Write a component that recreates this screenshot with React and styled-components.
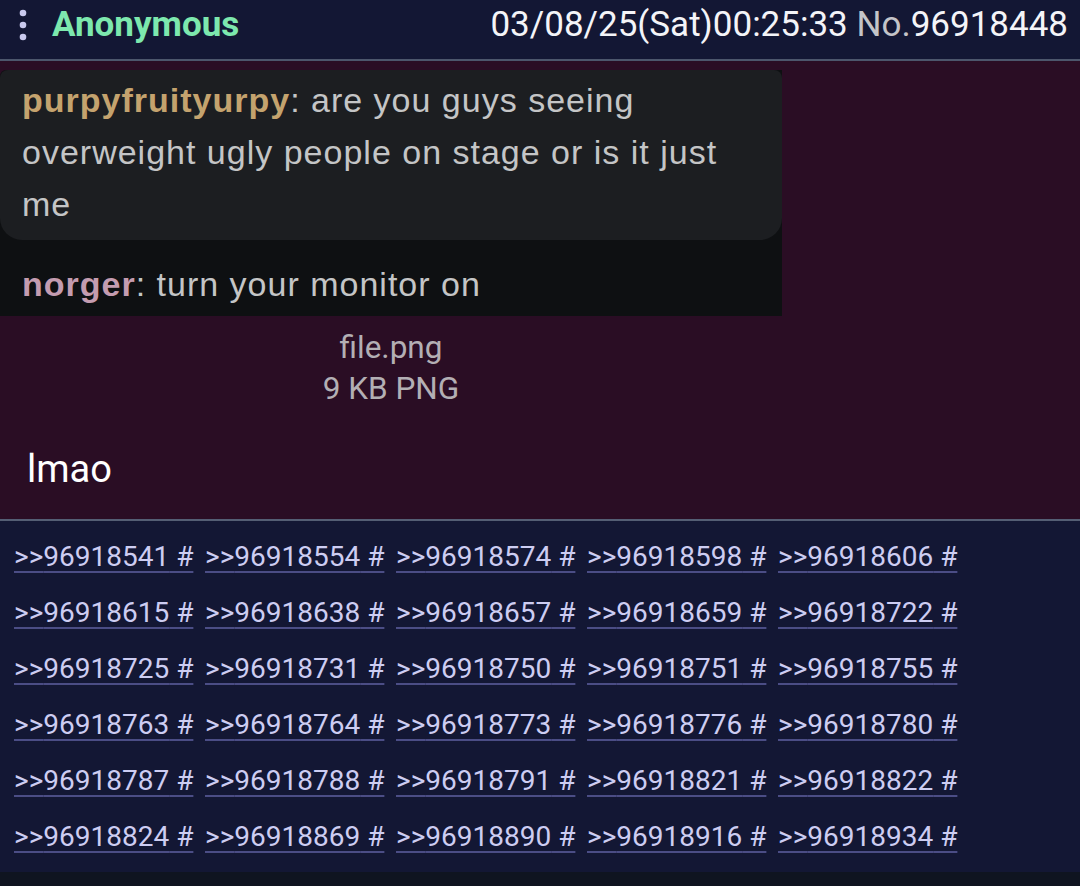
import React from 'react'
import styled, { createGlobalStyle } from 'styled-components'

const Global = createGlobalStyle`
  *, *::before, *::after {
    box-sizing: border-box;
  }
  html, body {
    margin: 0;
    padding: 0;
    background: #0f1420;
  }
  body {
    font-family: Roboto, "Noto Sans", sans-serif;
  }
`

const Page = styled.div`
  width: 1080px;
  height: 886px;
  background: #0f1420;
  overflow: hidden;
`

const Header = styled.div`
  height: 61px;
  display: flex;
  align-items: center;
  padding: 0 12px 10px 18px;
  background: #131734;
  border-bottom: 2px solid #4c566c;
`

const Dots = styled.svg`
  width: 10px;
  height: 34px;
  margin-right: 24px;
  flex-shrink: 0;
`

const Name = styled.span`
  color: #7de8ae;
  font-weight: 700;
  font-size: 35px;
`

const Stamp = styled.span`
  margin-left: auto;
  color: #f4f4f8;
  font-size: 35px;
`

const PostNo = styled.span`
  color: #c4c4c8;
`

const Post = styled.div`
  background: #2a0d24;
  padding-top: 9px;
  height: 460px;
  border-bottom: 2px solid #545e74;
`

const Shot = styled.div`
  width: 782px;
  height: 246px;
  background: #0e1012;
  font-family: "Liberation Sans", Arial, sans-serif;
  font-size: 34px;
  letter-spacing: 1px;
  color: #c4c5c6;
  border-top-left-radius: 6px;
`

const Bubble = styled.div`
  height: 170px;
  background: #1c1e21;
  border-radius: 8px 8px 22px 22px;
  padding: 4px 0 0 22px;
  line-height: 52px;
`

const Line = styled.div`
  padding-left: 22px;
  line-height: 52px;
  margin-top: 18px;
`

const Who = styled.span`
  font-weight: 700;
  color: ${p => p.$c};
`

const FileInfo = styled.div`
  width: 782px;
  text-align: center;
  color: #b3afb4;
  font-size: 31.5px;
  line-height: 41px;
  margin-top: 11px;
`

const Body = styled.div`
  color: #ffffff;
  font-size: 38px;
  padding-left: 27px;
  margin-top: 38px;
  line-height: 44px;
`

const Replies = styled.div`
  background: #131734;
  padding: 7px 0 8px 14px;
  display: grid;
  grid-template-columns: repeat(5, 191px);
  grid-auto-rows: 56px;
  align-items: center;
`

const Quote = styled.a`
  color: #cdcdf2;
  font-size: 28px;
  text-decoration: underline;
  text-decoration-color: #4b4d85;
  text-decoration-thickness: 2px;
  text-underline-offset: 5px;
  white-space: nowrap;
`

const ids = [
  '96918541', '96918554', '96918574', '96918598', '96918606',
  '96918615', '96918638', '96918657', '96918659', '96918722',
  '96918725', '96918731', '96918750', '96918751', '96918755',
  '96918763', '96918764', '96918773', '96918776', '96918780',
  '96918787', '96918788', '96918791', '96918821', '96918822',
  '96918824', '96918869', '96918890', '96918916', '96918934',
]

export default function App() {
  return (
    <Page>
      <Global />
      <Header>
        <Dots viewBox="0 0 10 34">
          <circle cx="5" cy="5" r="3.3" fill="#c9c9ee" />
          <circle cx="5" cy="17" r="3.3" fill="#c9c9ee" />
          <circle cx="5" cy="29" r="3.3" fill="#c9c9ee" />
        </Dots>
        <Name>Anonymous</Name>
        <Stamp>
          03/08/25(Sat)00:25:33 <PostNo>No.</PostNo>96918448
        </Stamp>
      </Header>
      <Post>
        <Shot>
          <Bubble>
            <Who $c="#c4a36e">purpyfruityurpy</Who>: are you guys seeing
            <br />
            overweight ugly people on stage or is it just
            <br />
            me
          </Bubble>
          <Line>
            <Who $c="#c49cb0">norger</Who>: turn your monitor on
          </Line>
        </Shot>
        <FileInfo>
          file.png
          <br />
          9 KB PNG
        </FileInfo>
        <Body>lmao</Body>
      </Post>
      <Replies>
        {ids.map(id => (
          <div key={id}>
            <Quote href="#">&gt;&gt;{id} #</Quote>
          </div>
        ))}
      </Replies>
    </Page>
  )
}
